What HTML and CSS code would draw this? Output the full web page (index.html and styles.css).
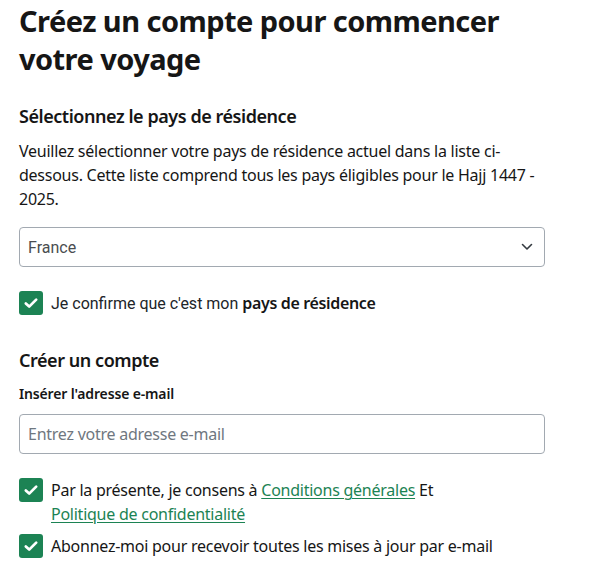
FILE: index.html
```html
<!DOCTYPE html>
<html lang="fr">
<head>
<meta charset="utf-8">
<title>Créez un compte</title>
<link rel="stylesheet" href="styles.css">
</head>
<body>
<main class="page">
  <h1 class="title">Créez un compte pour commencer votre voyage</h1>

  <h2 class="section-title first">Sélectionnez le pays de résidence</h2>
  <p class="intro">Veuillez sélectionner votre pays de résidence actuel dans la liste ci-dessous. Cette liste comprend tous les pays éligibles pour le Hajj 1447 - 2025.</p>

  <div class="select">
    <span class="select-value">France</span>
    <svg class="chevron" width="12" height="8" viewBox="0 0 12 8"><path d="M1.5 1.5 L6 6 L10.5 1.5" fill="none" stroke="#343a40" stroke-width="1.6" stroke-linecap="round" stroke-linejoin="round"/></svg>
  </div>

  <div class="check-row confirm">
    <span class="box"><svg width="24" height="24" viewBox="0 0 24 24"><path d="M6.8 12.4 L10.2 15.6 L17.2 8.6" fill="none" stroke="#fff" stroke-width="2.7" stroke-linecap="round" stroke-linejoin="round"/></svg></span>
    <span class="check-text roboto">Je confirme que c'est mon <b class="plex-bold">pays de résidence</b></span>
  </div>

  <h2 class="section-title account">Créer un compte</h2>
  <label class="field-label">Insérer l'adresse e-mail</label>
  <div class="input"><span class="placeholder">Entrez votre adresse e-mail</span></div>

  <div class="check-row terms">
    <span class="box"><svg width="24" height="24" viewBox="0 0 24 24"><path d="M6.8 12.4 L10.2 15.6 L17.2 8.6" fill="none" stroke="#fff" stroke-width="2.7" stroke-linecap="round" stroke-linejoin="round"/></svg></span>
    <span class="check-text narrow">Par la présente, je consens à <a class="link" href="#">Conditions générales</a> Et <a class="link" href="#">Politique de confidentialité</a></span>
  </div>

  <div class="check-row news">
    <span class="box"><svg width="24" height="24" viewBox="0 0 24 24"><path d="M6.8 12.4 L10.2 15.6 L17.2 8.6" fill="none" stroke="#fff" stroke-width="2.7" stroke-linecap="round" stroke-linejoin="round"/></svg></span>
    <span class="check-text">Abonnez-moi pour recevoir toutes les mises à jour par e-mail</span>
  </div>
</main>
</body>
</html>
```
FILE: styles.css
```css
* { box-sizing: border-box; }
html, body { margin: 0; padding: 0; background: #fff; }
body {
  font-family: "Noto Sans", "Open Sans", sans-serif;
  color: #161616;
  width: 591px;
}
.page {
  padding: 2px 0 0 19px;
  width: 545px;
}
.title {
  margin: 0;
  font-size: 29px;
  line-height: 38px;
  font-weight: 700;
  letter-spacing: -0.55px;
  color: #161616;
}
.section-title {
  margin: 0;
  font-size: 18px;
  line-height: 24px;
  font-weight: 600;
  letter-spacing: -0.45px;
}
.section-title.first { margin-top: 26px; }
.intro {
  margin: 11px 0 0;
  font-size: 16px;
  line-height: 24px;
  letter-spacing: -0.25px;
  color: #161616;
}
.select {
  margin-top: 16px;
  height: 40px;
  border: 1px solid #a2a9b1;
  border-radius: 4px;
  display: flex;
  align-items: center;
  justify-content: space-between;
  padding: 0 11px 0 8px;
}
.select-value {
  font-family: Roboto, "Liberation Sans", sans-serif;
  font-size: 16px;
  color: #4a4d50;
}
.check-row {
  display: flex;
  align-items: flex-start;
  gap: 8px;
}
.box {
  flex: 0 0 24px;
  width: 24px;
  height: 24px;
  background: #1c8354;
  border-radius: 3px;
  display: block;
}
.box svg { display: block; }
.check-text {
  font-size: 16px;
  line-height: 24px;
  letter-spacing: -0.25px;
  color: #161616;
}
.check-text.narrow { max-width: 420px; }
.roboto { font-family: Roboto, "Liberation Sans", sans-serif; color: #212529; letter-spacing: 0; }
.plex-bold { font-family: "Noto Sans", sans-serif; font-weight: 600; color: #161616; letter-spacing: -0.35px; }
.confirm { margin-top: 24px; }
.section-title.account { margin-top: 32px; }
.field-label {
  display: block;
  margin-top: 12px;
  font-size: 14px;
  line-height: 20px;
  font-weight: 600;
  letter-spacing: -0.15px;
}
.input {
  margin-top: 10px;
  height: 40px;
  border: 1px solid #a2a9b1;
  border-radius: 4px;
  display: flex;
  align-items: center;
  padding: 0 8px;
}
.placeholder {
  font-size: 16px;
  letter-spacing: -0.25px;
  color: #6f7780;
}
.terms { margin-top: 24px; }
.news { margin-top: 8px; }
.link {
  color: #1c8354;
  text-decoration: underline;
  text-underline-offset: 2px;
  text-decoration-thickness: 1px;
}
```
